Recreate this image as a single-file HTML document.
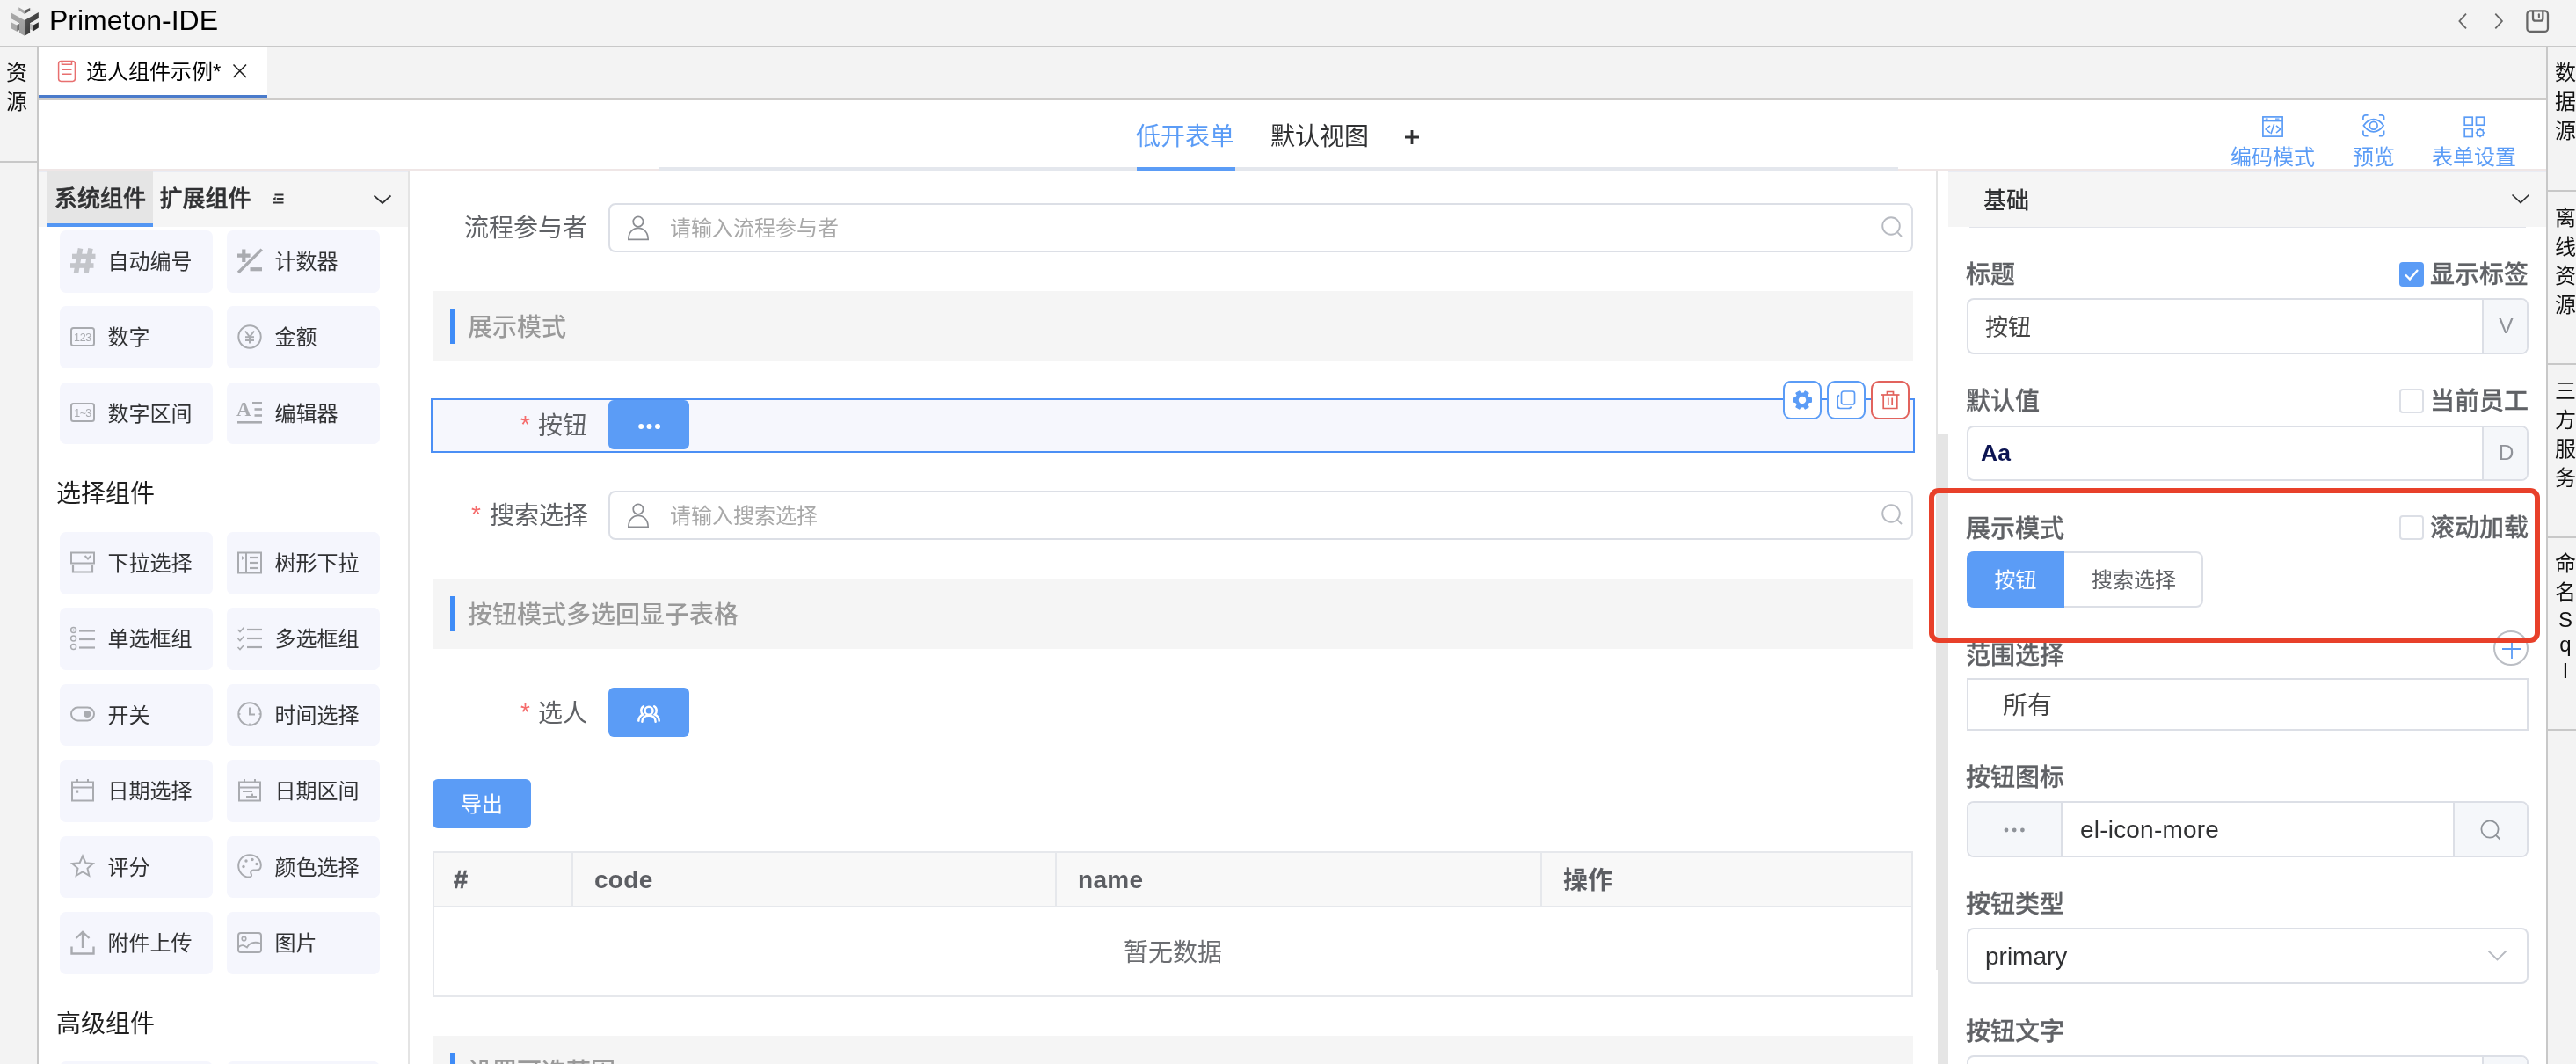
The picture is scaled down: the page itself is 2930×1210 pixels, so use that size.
<!DOCTYPE html>
<html lang="zh-CN"><head><meta charset="utf-8"><title>Primeton-IDE</title>
<style>
html,body{margin:0;padding:0;}
body{width:2930px;height:1210px;overflow:hidden;background:#fff;position:relative;font-family:"Liberation Sans","Noto Sans CJK SC",sans-serif;will-change:transform;}
div,svg{position:absolute;box-sizing:border-box;}
.t{white-space:nowrap;}
svg{overflow:visible;}
svg text{font-family:"Liberation Sans","Noto Sans CJK SC",sans-serif;}
.card{background:#f5f6fd;border-radius:7px;}
.inp{border:2px solid #dcdfe6;border-radius:8px;background:#fff;}
</style></head><body>
<div style="left:0px;top:0px;width:2930px;height:52px;background:#f3f3f3;"></div>
<div style="left:0px;top:52px;width:2930px;height:2px;background:#c8c8c8;"></div>
<svg style="left:6px;top:0px;" width="50" height="50" viewBox="0 0 1064 1064">
<defs><linearGradient id="lgR" x1="0" y1="0" x2="1" y2="1"><stop offset="0" stop-color="#5a5a5a"/><stop offset="1" stop-color="#2c2c2c"/></linearGradient>
<linearGradient id="lgL" x1="0" y1="0" x2="0" y2="1"><stop offset="0" stop-color="#a8a8a8"/><stop offset="1" stop-color="#9a9a9a"/></linearGradient></defs>
<polygon points="130,300 460,120 805,295 468,492" fill="#efefef"/>
<polygon points="325,175 460,105 600,190 465,258" fill="#f5f5f5"/>
<polygon points="325,175 465,258 465,338 325,245" fill="#a9a9a9"/>
<polygon points="600,190 465,258 465,338 600,262" fill="#5c5c5c"/>
<polygon points="130,305 468,492 468,865 340,795 340,560 130,445" fill="url(#lgL)"/>
<polygon points="805,300 468,492 468,865 598,795 598,560 805,445" fill="url(#lgR)"/>
<polygon points="130,447 340,562 340,575 280,604 130,530" fill="#eeeeee"/>
<polygon points="130,530 280,604 280,762 130,682" fill="#a9a9a9"/>
<polygon points="280,604 340,574 340,722 280,762" fill="#6c6c6c"/>
<polygon points="805,447 598,562 598,568 680,607 805,535" fill="#eeeeee"/>
<polygon points="598,566 680,607 680,752 598,702" fill="#b8b8b8"/>
<polygon points="680,607 805,535 805,672 680,752" fill="#2e2e2e"/>
</svg>
<div class="t" style="left:56px;top:1.30px;height:44px;line-height:44px;font-size:32px;color:#000;">Primeton-IDE</div>
<svg style="left:2790px;top:10px;" width="64" height="30" viewBox="0 0 64 30"><path d="M15 5.7 L7.4 14 L15 22.3 M48.3 5.7 L55.9 14 L48.3 22.3" fill="none" stroke="#666" stroke-width="1.8"/></svg>
<svg style="left:2872.8px;top:10.8px;" width="26.4" height="26.4" viewBox="0 0 28 28"><rect x="1.5" y="1.5" width="25" height="25" rx="4" fill="none" stroke="#666" stroke-width="2.4"/><path d="M8.5 2 V10.5 Q8.5 13.5 11.5 13.5 H17.5 Q20.5 13.5 20.5 10.5 V2" fill="none" stroke="#666" stroke-width="2.4"/><path d="M15.8 5.5 V9" stroke="#666" stroke-width="2.2" stroke-linecap="round"/></svg>
<div style="left:0px;top:54px;width:42px;height:1156px;background:#f3f3f3;"></div>
<div style="left:42px;top:54px;width:2px;height:1156px;background:#c8c8c8;"></div>
<div style="left:0px;top:183px;width:42px;height:2px;background:#c8c8c8;"></div>
<div class="t" style="left:7px;top:67.80px;height:30px;line-height:30px;font-size:24px;color:#111;">资</div>
<div class="t" style="left:7px;top:100.80px;height:30px;line-height:30px;font-size:24px;color:#111;">源</div>
<div style="left:2898px;top:54px;width:32px;height:1156px;background:#f3f3f3;"></div>
<div style="left:2896px;top:54px;width:2px;height:1156px;background:#c8c8c8;"></div>
<div style="left:2898px;top:216px;width:32px;height:2px;background:#c8c8c8;"></div>
<div style="left:2898px;top:413px;width:32px;height:2px;background:#c8c8c8;"></div>
<div style="left:2898px;top:610px;width:32px;height:2px;background:#c8c8c8;"></div>
<div style="left:2898px;top:829px;width:32px;height:2px;background:#c8c8c8;"></div>
<div class="t" style="left:2906px;top:67.80px;height:30px;line-height:30px;font-size:24px;color:#111;">数</div>
<div class="t" style="left:2906px;top:100.80px;height:30px;line-height:30px;font-size:24px;color:#111;">据</div>
<div class="t" style="left:2906px;top:133.80px;height:30px;line-height:30px;font-size:24px;color:#111;">源</div>
<div class="t" style="left:2906px;top:232.80px;height:30px;line-height:30px;font-size:24px;color:#111;">离</div>
<div class="t" style="left:2906px;top:265.80px;height:30px;line-height:30px;font-size:24px;color:#111;">线</div>
<div class="t" style="left:2906px;top:298.80px;height:30px;line-height:30px;font-size:24px;color:#111;">资</div>
<div class="t" style="left:2906px;top:331.80px;height:30px;line-height:30px;font-size:24px;color:#111;">源</div>
<div class="t" style="left:2906px;top:429.80px;height:30px;line-height:30px;font-size:24px;color:#111;">三</div>
<div class="t" style="left:2906px;top:462.80px;height:30px;line-height:30px;font-size:24px;color:#111;">方</div>
<div class="t" style="left:2906px;top:495.80px;height:30px;line-height:30px;font-size:24px;color:#111;">服</div>
<div class="t" style="left:2906px;top:528.80px;height:30px;line-height:30px;font-size:24px;color:#111;">务</div>
<div class="t" style="left:2906px;top:625.80px;height:30px;line-height:30px;font-size:24px;color:#111;">命</div>
<div class="t" style="left:2906px;top:658.80px;height:30px;line-height:30px;font-size:24px;color:#111;">名</div>
<div class="t" style="left:2906px;top:689.80px;height:30px;line-height:30px;font-size:24px;color:#111;width:24px;text-align:center;">S</div>
<div class="t" style="left:2906px;top:717.80px;height:30px;line-height:30px;font-size:24px;color:#111;width:24px;text-align:center;">q</div>
<div class="t" style="left:2906px;top:747.80px;height:30px;line-height:30px;font-size:24px;color:#111;width:24px;text-align:center;">l</div>
<div style="left:44px;top:54px;width:2852px;height:58px;background:#f3f3f3;"></div>
<div style="left:44px;top:112px;width:2852px;height:2px;background:#cdcbc9;"></div>
<div style="left:44px;top:54px;width:260px;height:58px;background:#fff;"></div>
<div style="left:44px;top:108px;width:260px;height:4px;background:#4a7bcb;"></div>
<svg style="left:65px;top:68px;" width="22" height="26" viewBox="0 0 22 26"><rect x="1.6" y="1.6" width="18.8" height="22.8" rx="2.8" fill="none" stroke="#e86f6f" stroke-width="1.5"/><path d="M5.5 1.6 V5.2 H16.5 V1.6" fill="none" stroke="#e86f6f" stroke-width="1.5"/><path d="M5.5 11.2 H16.5 M5.5 16.3 H16.5" stroke="#e86f6f" stroke-width="1.5"/></svg>
<div class="t" style="left:98px;top:65.80px;height:32px;line-height:32px;font-size:24px;color:#000;">选人组件示例*</div>
<svg style="left:264px;top:72px;" width="18" height="18" viewBox="0 0 18 18"><path d="M1.5 1.5 L16 16 M16 1.5 L1.5 16" stroke="#222" stroke-width="1.6" fill="none"/></svg>
<div style="left:44px;top:192px;width:2852px;height:2px;background:#efe6e6;"></div>
<div style="left:749px;top:190px;width:1410px;height:4px;background:#e4e7ed;"></div>
<div style="left:1293px;top:190px;width:112px;height:4px;background:#5b9cf6;"></div>
<div class="t" style="left:1292px;top:135.80px;height:40px;line-height:40px;font-size:28px;color:#5b9cf6;">低开表单</div>
<div class="t" style="left:1445px;top:135.80px;height:40px;line-height:40px;font-size:28px;color:#303133;">默认视图</div>
<svg style="left:1597px;top:147px;" width="18" height="18" viewBox="0 0 18 18"><path d="M9 1 V17 M1 9 H17" stroke="#303133" stroke-width="2.8" fill="none"/></svg>
<svg style="left:2572px;top:131px;" width="26" height="26" viewBox="0 0 26 26"><rect x="1.9" y="1.9" width="22.2" height="22.2" fill="none" stroke="#5b9cf6" stroke-width="1.7"/><path d="M1.9 6.6 H24.1" stroke="#5b9cf6" stroke-width="1.5"/><path d="M4.8 4.2 H7.6 M16 4.2 H20.5" stroke="#5b9cf6" stroke-width="1.3"/><path d="M10 11.8 L5.2 15.9 L10 20 M17 11.8 L21.8 15.9 L17 20 M14.6 10.2 L11 21.3" fill="none" stroke="#5b9cf6" stroke-width="1.6"/></svg>
<div class="t" style="left:2537px;top:162.80px;height:32px;line-height:32px;font-size:24px;color:#5b9cf6;">编码模式</div>
<svg style="left:2685.5px;top:129.3px;" width="27.5" height="27.5" viewBox="0 0 29 29"><g fill="none" stroke="#5b9cf6" stroke-width="1.8"><path d="M2 8.5 V5 Q2 2 5 2 H8"/><path d="M21 2 H24 Q27 2 27 5 V8.5"/><path d="M2 20.5 V24 Q2 27 5 27 H8"/><path d="M21 27 H24 Q27 27 27 24 V20.5"/><path d="M2.5 14.5 Q8 7 14.5 7 Q21 7 26.5 14.5 Q21 22 14.5 22 Q8 22 2.5 14.5 Z"/><circle cx="14.5" cy="14.5" r="4.6"/></g></svg>
<div class="t" style="left:2676px;top:162.80px;height:32px;line-height:32px;font-size:24px;color:#5b9cf6;">预览</div>
<svg style="left:2802px;top:131.8px;" width="26" height="26" viewBox="0 0 26 26"><g fill="none" stroke="#5b9cf6" stroke-width="1.7"><rect x="1.2" y="1.2" width="9" height="9"/><rect x="14.5" y="1.2" width="9" height="9"/><rect x="1.2" y="14.5" width="9" height="9"/><circle cx="19" cy="19" r="3.6"/><path d="M19 13.8 V15.2 M19 22.8 V24.2 M13.8 19 H15.2 M22.8 19 H24.2 M15.3 15.3 L16.3 16.3 M21.7 21.7 L22.7 22.7 M15.3 22.7 L16.3 21.7 M21.7 16.3 L22.7 15.3" stroke-width="1.5"/></g></svg>
<div class="t" style="left:2766px;top:162.80px;height:32px;line-height:32px;font-size:24px;color:#5b9cf6;">表单设置</div>
<div style="left:44px;top:194px;width:420px;height:64px;background:#f5f5f5;border-top:2px solid #e9ecf4;"></div>
<div style="left:464px;top:194px;width:2px;height:1016px;background:#e4e4e4;"></div>
<div style="left:54px;top:194px;width:120px;height:64px;background:#e5e5e5;"></div>
<div style="left:54px;top:254px;width:120px;height:4px;background:#5396f3;"></div>
<div class="t" style="left:62px;top:208.30px;height:36px;line-height:36px;font-size:26px;color:#303133;font-weight:500;-webkit-text-stroke:0.5px #303133;">系统组件</div>
<div class="t" style="left:181.5px;top:208.30px;height:36px;line-height:36px;font-size:26px;color:#303133;font-weight:500;-webkit-text-stroke:0.5px #303133;">扩展组件</div>
<svg style="left:310px;top:220px;" width="14" height="12" viewBox="0 0 14 12"><path d="M2.5 1.5 H12.5 M4.8 6 H12.5 M1 10.5 H12.5" stroke="#303133" stroke-width="1.9" fill="none"/><path d="M0.3 6 L3.6 3.8 V8.2 Z" fill="#303133"/></svg>
<svg style="left:424px;top:221px;" width="22" height="12" viewBox="0 0 22 12"><path d="M1.5 1.5 L11 10 L20.5 1.5" stroke="#303133" stroke-width="1.7" fill="none"/></svg>
<div class="card" style="left:68px;top:262px;width:174px;height:70.6px;"></div>
<svg style="left:80px;top:282.5px;" width="28" height="28" viewBox="0 0 28 28"><g fill="none" stroke="#c3c5ca" stroke-width="5.6"><path d="M11.5 -0.5 L6.5 27.5"/><path d="M23 -0.5 L18 27.5"/><path d="M2 8.5 H28.5"/><path d="M0 19 H26.5"/></g></svg>
<div class="t" style="left:122.5px;top:281.80px;height:32px;line-height:32px;font-size:24px;color:#303133;">自动编号</div>
<div class="card" style="left:258px;top:262px;width:174px;height:70.6px;"></div>
<svg style="left:270px;top:282.5px;" width="28" height="28" viewBox="0 0 28 28"><g fill="none" stroke="#a9abb0"><path d="M7.3 0.5 V15 M0 7.7 H14.6" stroke-width="4.2"/><path d="M1 27 L27.8 0.6" stroke-width="3.4"/><path d="M14.5 23.2 H28" stroke-width="4.2"/></g></svg>
<div class="t" style="left:312.5px;top:281.80px;height:32px;line-height:32px;font-size:24px;color:#303133;">计数器</div>
<div class="card" style="left:68px;top:348.4px;width:174px;height:70.6px;"></div>
<svg style="left:80px;top:368.9px;" width="28" height="28" viewBox="0 0 28 28"><rect x="1" y="4" width="26" height="20" rx="2.5" fill="none" stroke="#a9abb0" stroke-width="2"/><text x="14" y="19.2" font-size="12.5" text-anchor="middle" fill="#a9abb0" letter-spacing="-0.3">123</text></svg>
<div class="t" style="left:122.5px;top:367.80px;height:32px;line-height:32px;font-size:24px;color:#303133;">数字</div>
<div class="card" style="left:258px;top:348.4px;width:174px;height:70.6px;"></div>
<svg style="left:270px;top:368.9px;" width="28" height="28" viewBox="0 0 28 28"><circle cx="14" cy="14" r="12.7" fill="none" stroke="#a9abb0" stroke-width="2"/><g fill="none" stroke="#a9abb0" stroke-width="2"><path d="M9 7.5 L14 14 L19 7.5"/><path d="M14 14 V21.5"/><path d="M9 14.2 H19"/><path d="M9 18 H19"/></g></svg>
<div class="t" style="left:312.5px;top:367.80px;height:32px;line-height:32px;font-size:24px;color:#303133;">金额</div>
<div class="card" style="left:68px;top:434.8px;width:174px;height:70.6px;"></div>
<svg style="left:80px;top:455.3px;" width="28" height="28" viewBox="0 0 28 28"><rect x="1" y="4" width="26" height="20" rx="2.5" fill="none" stroke="#a9abb0" stroke-width="2"/><text x="14" y="19" font-size="12.5" text-anchor="middle" fill="#a9abb0" letter-spacing="-0.6">1~3</text></svg>
<div class="t" style="left:122.5px;top:454.80px;height:32px;line-height:32px;font-size:24px;color:#303133;">数字区间</div>
<div class="card" style="left:258px;top:434.8px;width:174px;height:70.6px;"></div>
<svg style="left:270px;top:455.3px;" width="28" height="28" viewBox="0 0 28 28"><text x="-1" y="18" font-size="23" font-weight="700" fill="#a9abb0" style="font-family:'Liberation Serif',serif">A</text><g fill="none" stroke="#a9abb0" stroke-width="2.6"><path d="M17 3.3 H28"/><path d="M19.5 10.5 H28"/><path d="M19.5 17.5 H28"/><path d="M0 25.3 H28"/></g></svg>
<div class="t" style="left:312.5px;top:454.80px;height:32px;line-height:32px;font-size:24px;color:#303133;">编辑器</div>
<div class="card" style="left:68px;top:605px;width:174px;height:70.6px;"></div>
<svg style="left:80px;top:625.5px;" width="28" height="28" viewBox="0 0 28 28"><rect x="1" y="2.5" width="26" height="12" fill="none" stroke="#a9abb0" stroke-width="2"/><path d="M16.5 6 L20 9.5 L23.5 6" fill="none" stroke="#a9abb0" stroke-width="2"/><path d="M3 16.5 V24.5 H25 V16.5" fill="none" stroke="#a9abb0" stroke-width="2.2"/></svg>
<div class="t" style="left:122.5px;top:624.80px;height:32px;line-height:32px;font-size:24px;color:#303133;">下拉选择</div>
<div class="card" style="left:258px;top:605px;width:174px;height:70.6px;"></div>
<svg style="left:270px;top:625.5px;" width="28" height="28" viewBox="0 0 28 28"><rect x="1" y="2.5" width="26" height="23" fill="none" stroke="#a9abb0" stroke-width="2"/><path d="M10 2.5 V25.5" fill="none" stroke="#a9abb0" stroke-width="2"/><path d="M5 6 L8 8.5 L5 11 Z" fill="#a9abb0"/><g fill="none" stroke="#a9abb0" stroke-width="2.2"><path d="M14 8 H23.5"/><path d="M14 14 H23.5"/><path d="M14 20 H23.5"/></g></svg>
<div class="t" style="left:312.5px;top:624.80px;height:32px;line-height:32px;font-size:24px;color:#303133;">树形下拉</div>
<div class="card" style="left:68px;top:691.4px;width:174px;height:70.6px;"></div>
<svg style="left:80px;top:711.9px;" width="28" height="28" viewBox="0 0 28 28"><g fill="none" stroke="#a9abb0" stroke-width="1.4"><circle cx="3.6" cy="4.5" r="3"/><circle cx="3.6" cy="14" r="3"/><circle cx="3.6" cy="23.5" r="3"/></g><circle cx="3.6" cy="4.5" r="1" fill="#a9abb0"/><g fill="none" stroke="#a9abb0" stroke-width="2.2"><path d="M10 5.5 H28"/><path d="M10 15 H28"/><path d="M10 24.5 H28"/></g></svg>
<div class="t" style="left:122.5px;top:710.80px;height:32px;line-height:32px;font-size:24px;color:#303133;">单选框组</div>
<div class="card" style="left:258px;top:691.4px;width:174px;height:70.6px;"></div>
<svg style="left:270px;top:711.9px;" width="28" height="28" viewBox="0 0 28 28"><g fill="none" stroke="#a9abb0" stroke-width="1.6"><path d="M0.5 4 L3 6.5 L7.5 1.5"/><path d="M0.5 14 L3 16.5 L7.5 11.5"/><path d="M0.5 24 L3 26.5 L7.5 21.5"/></g><g fill="none" stroke="#a9abb0" stroke-width="2.2"><path d="M11 4 H28"/><path d="M11 14 H28"/><path d="M11 24 H28"/></g></svg>
<div class="t" style="left:312.5px;top:710.80px;height:32px;line-height:32px;font-size:24px;color:#303133;">多选框组</div>
<div class="card" style="left:68px;top:777.8px;width:174px;height:70.6px;"></div>
<svg style="left:80px;top:798.3px;" width="28" height="28" viewBox="0 0 28 28"><rect x="1" y="6.5" width="26" height="15" rx="7.5" fill="none" stroke="#a9abb0" stroke-width="2"/><circle cx="19.3" cy="14" r="4" fill="#a9abb0"/></svg>
<div class="t" style="left:122.5px;top:797.80px;height:32px;line-height:32px;font-size:24px;color:#303133;">开关</div>
<div class="card" style="left:258px;top:777.8px;width:174px;height:70.6px;"></div>
<svg style="left:270px;top:798.3px;" width="28" height="28" viewBox="0 0 28 28"><circle cx="14" cy="14" r="12.7" fill="none" stroke="#a9abb0" stroke-width="2"/><path d="M14 6.5 V14.5 H20" fill="none" stroke="#a9abb0" stroke-width="2"/><g fill="none" stroke="#a9abb0" stroke-width="1.6"><path d="M14 24.5 V27"/><path d="M1 14 H3.5"/><path d="M24.5 14 H27"/></g></svg>
<div class="t" style="left:312.5px;top:797.80px;height:32px;line-height:32px;font-size:24px;color:#303133;">时间选择</div>
<div class="card" style="left:68px;top:864.2px;width:174px;height:70.6px;"></div>
<svg style="left:80px;top:884.7px;" width="28" height="28" viewBox="0 0 28 28"><rect x="2" y="4.5" width="24" height="21" fill="none" stroke="#a9abb0" stroke-width="2"/><path d="M2 10.5 H26" fill="none" stroke="#a9abb0" stroke-width="2"/><path d="M8 1 V6" fill="none" stroke="#a9abb0" stroke-width="2"/><path d="M20 1 V6" fill="none" stroke="#a9abb0" stroke-width="2"/><rect x="6" y="13.5" width="3.2" height="3.2" fill="#a9abb0"/></svg>
<div class="t" style="left:122.5px;top:883.80px;height:32px;line-height:32px;font-size:24px;color:#303133;">日期选择</div>
<div class="card" style="left:258px;top:864.2px;width:174px;height:70.6px;"></div>
<svg style="left:270px;top:884.7px;" width="28" height="28" viewBox="0 0 28 28"><rect x="2" y="4.5" width="24" height="21" fill="none" stroke="#a9abb0" stroke-width="2"/><path d="M2 10.5 H26" fill="none" stroke="#a9abb0" stroke-width="2"/><path d="M8 1 V6" fill="none" stroke="#a9abb0" stroke-width="2"/><path d="M20 1 V6" fill="none" stroke="#a9abb0" stroke-width="2"/><path d="M6 15 H17" fill="none" stroke="#a9abb0" stroke-width="2"/><path d="M10 21 H22" fill="none" stroke="#a9abb0" stroke-width="2"/><rect x="15" y="17.6" width="3" height="3" fill="#a9abb0"/></svg>
<div class="t" style="left:312.5px;top:883.80px;height:32px;line-height:32px;font-size:24px;color:#303133;">日期区间</div>
<div class="card" style="left:68px;top:950.6px;width:174px;height:70.6px;"></div>
<svg style="left:80px;top:971.1px;" width="28" height="28" viewBox="0 0 28 28"><path d="M14 2.5 L17.4 10.2 L25.8 11 L19.5 16.6 L21.3 24.8 L14 20.5 L6.7 24.8 L8.5 16.6 L2.2 11 L10.6 10.2 Z" fill="none" stroke="#a9abb0" stroke-width="2" stroke-linejoin="miter"/></svg>
<div class="t" style="left:122.5px;top:970.80px;height:32px;line-height:32px;font-size:24px;color:#303133;">评分</div>
<div class="card" style="left:258px;top:950.6px;width:174px;height:70.6px;"></div>
<svg style="left:270px;top:971.1px;" width="28" height="28" viewBox="0 0 28 28"><path d="M14 1.3 C6.5 1.3 1.2 6.8 1.2 13.5 C1.2 21 7 26.6 13 26.6 C16.2 26.6 16.6 24.6 15.6 22.8 C14.4 20.6 15.8 18.6 18.2 18.6 L21.5 18.6 C25 18.6 26.8 16.4 26.8 13 C26.8 6.5 21.5 1.3 14 1.3 Z" fill="none" stroke="#a9abb0" stroke-width="2"/><circle cx="7" cy="14.5" r="1.7" fill="#a9abb0"/><circle cx="10" cy="8" r="1.7" fill="#a9abb0"/><circle cx="17" cy="6.5" r="1.7" fill="#a9abb0"/><circle cx="22" cy="11.5" r="1.7" fill="#a9abb0"/></svg>
<div class="t" style="left:312.5px;top:970.80px;height:32px;line-height:32px;font-size:24px;color:#303133;">颜色选择</div>
<div class="card" style="left:68px;top:1037px;width:174px;height:70.6px;"></div>
<svg style="left:80px;top:1057.5px;" width="28" height="28" viewBox="0 0 28 28"><g fill="none" stroke="#a9abb0" stroke-width="2.4"><path d="M14 2 V20"/><path d="M6.5 9 L14 1.8 L21.5 9"/><path d="M1.5 18.5 V26.5 H26.5 V18.5"/></g></svg>
<div class="t" style="left:122.5px;top:1056.80px;height:32px;line-height:32px;font-size:24px;color:#303133;">附件上传</div>
<div class="card" style="left:258px;top:1037px;width:174px;height:70.6px;"></div>
<svg style="left:270px;top:1057.5px;" width="28" height="28" viewBox="0 0 28 28"><rect x="1" y="3" width="26" height="22" rx="3" fill="none" stroke="#a9abb0" stroke-width="2"/><circle cx="7.5" cy="9.5" r="2.3" fill="none" stroke="#a9abb0" stroke-width="1.6"/><path d="M1.5 19 C5 15.5 8 17.5 11 19.5 C13 15 19 12 26.5 15" fill="none" stroke="#a9abb0" stroke-width="1.8"/></svg>
<div class="t" style="left:312.5px;top:1056.80px;height:32px;line-height:32px;font-size:24px;color:#303133;">图片</div>
<div class="card" style="left:68px;top:1207px;width:174px;height:70.6px;"></div>
<div class="card" style="left:258px;top:1207px;width:174px;height:70.6px;"></div>
<div class="t" style="left:64px;top:542.80px;height:38px;line-height:38px;font-size:28px;color:#1f1f1f;">选择组件</div>
<div class="t" style="left:64px;top:1145.80px;height:38px;line-height:38px;font-size:28px;color:#1f1f1f;">高级组件</div>
<div class="t" style="left:528px;top:240.80px;height:38px;line-height:38px;font-size:28px;color:#606266;">流程参与者</div>
<div class="inp" style="left:692px;top:231px;width:1484px;height:56px;"></div>
<svg style="left:713px;top:245.5px;" width="25" height="28" viewBox="0 0 25 28"><g fill="none" stroke="#8b8d92" stroke-width="1.7"><circle cx="12.9" cy="6.1" r="5.7"/><path d="M1.85 26.3 C1.85 19 6.3 13.3 13 13.3 C19.7 13.3 24.15 19 24.15 26.3 Z" stroke-linejoin="miter"/></g></svg>
<div class="t" style="left:762px;top:243.80px;height:32px;line-height:32px;font-size:24px;color:#a8a8a8;">请输入流程参与者</div>
<svg style="left:2140px;top:245.5px;" width="24" height="24" viewBox="0 0 24 24"><g fill="none" stroke="#b7bac1" stroke-width="1.9"><circle cx="11" cy="11" r="9.8"/><path d="M18.2 18.2 L23 23"/></g></svg>
<div style="left:492px;top:331px;width:1684px;height:80px;background:#f5f5f5;"></div>
<div style="left:511.5px;top:351px;width:6.5px;height:40px;background:#3f8cf7;"></div>
<div class="t" style="left:532px;top:353.80px;height:38px;line-height:38px;font-size:28px;color:#999;font-weight:500;">展示模式</div>
<div style="left:490px;top:453px;width:1688px;height:62px;border:2px solid #4b8ff5;background:#f6f7fd;"></div>
<div class="t" style="left:592px;top:463.80px;height:38px;line-height:38px;font-size:28px;color:#f56c6c;">*</div>
<div class="t" style="left:612px;top:465.80px;height:38px;line-height:38px;font-size:28px;color:#606266;">按钮</div>
<div style="left:692px;top:455px;width:92px;height:56px;background:#5b9cf6;border-radius:6px;"></div>
<svg style="left:724px;top:480px;" width="30" height="10" viewBox="0 0 30 10"><circle cx="5.2" cy="5" r="3" fill="#fff"/><circle cx="14.5" cy="5" r="3" fill="#fff"/><circle cx="24" cy="5" r="3" fill="#fff"/></svg>
<div style="left:2028px;top:433px;width:44px;height:44px;border:2px solid #5b9cf6;border-radius:9px;background:#fff;"></div>
<svg style="left:2038px;top:443px;" width="24" height="24" viewBox="0 0 24 24"><g transform="translate(12 12) rotate(30)"><g fill="#5b9cf6"><rect x="-2.9" y="-11" width="5.8" height="6" rx="0.8" transform="rotate(0)"/><rect x="-2.9" y="-11" width="5.8" height="6" rx="0.8" transform="rotate(60)"/><rect x="-2.9" y="-11" width="5.8" height="6" rx="0.8" transform="rotate(120)"/><rect x="-2.9" y="-11" width="5.8" height="6" rx="0.8" transform="rotate(180)"/><rect x="-2.9" y="-11" width="5.8" height="6" rx="0.8" transform="rotate(240)"/><rect x="-2.9" y="-11" width="5.8" height="6" rx="0.8" transform="rotate(300)"/></g><circle r="6.3" fill="none" stroke="#5b9cf6" stroke-width="4.2"/></g></svg>
<div style="left:2078px;top:433px;width:44px;height:44px;border:2px solid #5b9cf6;border-radius:9px;background:#fff;"></div>
<svg style="left:2088px;top:443px;" width="24" height="24" viewBox="0 0 24 24"><g fill="none" stroke="#5b9cf6" stroke-width="1.7"><rect x="6.5" y="2" width="15" height="15" rx="2.5"/><path d="M4.2 6.5 Q2.2 7 2.2 9.5 V18.5 Q2.2 21.5 5.2 21.5 H14.5 Q17 21.5 17.5 19.5"/></g></svg>
<div style="left:2128px;top:433px;width:44px;height:44px;border:2px solid #e2635d;border-radius:9px;background:#fff;"></div>
<svg style="left:2138px;top:443px;" width="24" height="24" viewBox="0 0 24 24"><g fill="none" stroke="#e2635d" stroke-width="1.7"><path d="M1.5 6 H22.5"/><path d="M8.5 6 V2.5 H15.5 V6"/><path d="M4.2 6 V21.5 H19.8 V6"/><path d="M9.8 9.5 V18 M14.2 9.5 V18"/></g></svg>
<div class="t" style="left:536px;top:565.80px;height:38px;line-height:38px;font-size:28px;color:#f56c6c;">*</div>
<div class="t" style="left:557px;top:567.80px;height:38px;line-height:38px;font-size:28px;color:#606266;">搜索选择</div>
<div class="inp" style="left:692px;top:558px;width:1484px;height:56px;"></div>
<svg style="left:713px;top:572.5px;" width="25" height="28" viewBox="0 0 25 28"><g fill="none" stroke="#8b8d92" stroke-width="1.7"><circle cx="12.9" cy="6.1" r="5.7"/><path d="M1.85 26.3 C1.85 19 6.3 13.3 13 13.3 C19.7 13.3 24.15 19 24.15 26.3 Z" stroke-linejoin="miter"/></g></svg>
<div class="t" style="left:762px;top:570.80px;height:32px;line-height:32px;font-size:24px;color:#a8a8a8;">请输入搜索选择</div>
<svg style="left:2140px;top:572.5px;" width="24" height="24" viewBox="0 0 24 24"><g fill="none" stroke="#b7bac1" stroke-width="1.9"><circle cx="11" cy="11" r="9.8"/><path d="M18.2 18.2 L23 23"/></g></svg>
<div style="left:492px;top:658px;width:1684px;height:80px;background:#f5f5f5;"></div>
<div style="left:511.5px;top:678px;width:6.5px;height:40px;background:#3f8cf7;"></div>
<div class="t" style="left:532px;top:680.80px;height:38px;line-height:38px;font-size:28px;color:#999;font-weight:500;">按钮模式多选回显子表格</div>
<div class="t" style="left:592px;top:790.80px;height:38px;line-height:38px;font-size:28px;color:#f56c6c;">*</div>
<div class="t" style="left:612px;top:792.80px;height:38px;line-height:38px;font-size:28px;color:#606266;">选人</div>
<div style="left:692px;top:782px;width:92px;height:56px;background:#5b9cf6;border-radius:6px;"></div>
<svg style="left:725px;top:800.5px;" width="26" height="21.4" viewBox="0 0 28 23"><g fill="none" stroke="#fff" stroke-width="2.7" stroke-linecap="round"><circle cx="14" cy="7.8" r="4.9"/><path d="M5.8 21.3 C5.8 16.5 9.2 13.6 14 13.6 C18.8 13.6 22.2 16.5 22.2 21.3"/><path d="M7.4 2.4 C3.8 4.6 3.8 10 6.6 12.4 C3.4 13.8 1.6 16.8 1.4 20"/><path d="M20.6 2.4 C24.2 4.6 24.2 10 21.4 12.4 C24.6 13.8 26.4 16.8 26.6 20"/></g></svg>
<div style="left:492px;top:886px;width:112px;height:56px;background:#5b9cf6;border-radius:6px;"></div>
<div class="t" style="left:492px;top:898.80px;height:32px;line-height:32px;font-size:24px;color:#fff;width:112px;text-align:center;">导出</div>
<div style="left:492px;top:968px;width:1684px;height:166px;border:2px solid #e6e8ec;background:#fff;"></div>
<div style="left:494px;top:970px;width:1680px;height:60px;background:#f8f8f8;"></div>
<div style="left:494px;top:1030px;width:1680px;height:2px;background:#e6e8ec;"></div>
<div style="left:650px;top:970px;width:2px;height:60px;background:#e6e8ec;"></div>
<div style="left:1200px;top:970px;width:2px;height:60px;background:#e6e8ec;"></div>
<div style="left:1752px;top:970px;width:2px;height:60px;background:#e6e8ec;"></div>
<div class="t" style="left:516px;top:982.30px;height:36px;line-height:36px;font-size:29px;color:#5c5e63;font-weight:700;-webkit-text-stroke:0.7px #5c5e63;">#</div>
<div class="t" style="left:676px;top:982.80px;height:36px;line-height:36px;font-size:28px;color:#5c5e63;font-weight:700;letter-spacing:0.3px;">code</div>
<div class="t" style="left:1226px;top:982.80px;height:36px;line-height:36px;font-size:28px;color:#5c5e63;font-weight:700;letter-spacing:0.3px;">name</div>
<div class="t" style="left:1778px;top:982.80px;height:38px;line-height:38px;font-size:28px;color:#5c5e63;font-weight:700;">操作</div>
<div class="t" style="left:492px;top:1064.80px;height:38px;line-height:38px;font-size:28px;color:#6b6d71;width:1684px;text-align:center;">暂无数据</div>
<div style="left:492px;top:1178px;width:1684px;height:80px;background:#f5f5f5;"></div>
<div style="left:511.5px;top:1198px;width:6.5px;height:40px;background:#3f8cf7;"></div>
<div class="t" style="left:532px;top:1200.80px;height:38px;line-height:38px;font-size:28px;color:#999;font-weight:500;">设置可选范围</div>
<div style="left:2202px;top:194px;width:2px;height:1016px;background:#e4e4e4;"></div>
<div style="left:2202px;top:493px;width:14px;height:610px;background:#e5e5e5;"></div>
<div style="left:2204px;top:1103px;width:12px;height:107px;background:#e5e5e5;"></div>
<div style="left:2202px;top:1103px;width:2px;height:107px;background:#fff;"></div>
<div style="left:2216px;top:194px;width:680px;height:64px;background:#f5f5f5;border-top:2px solid #e9ecf4;"></div>
<div style="left:2240px;top:257.5px;width:633px;height:1.5px;background:#e2e4ea;"></div>
<div class="t" style="left:2256px;top:210.30px;height:36px;line-height:36px;font-size:26px;color:#303133;font-weight:500;">基础</div>
<svg style="left:2856px;top:220px;" width="22" height="13" viewBox="0 0 22 13"><path d="M1.5 1.5 L11 10.5 L20.5 1.5" stroke="#303133" stroke-width="1.7" fill="none"/></svg>
<div class="t" style="left:2236px;top:293.80px;height:38px;line-height:38px;font-size:28px;color:#606266;font-weight:500;-webkit-text-stroke:0.3px #606266;">标题</div>
<div style="left:2729px;top:298.0px;width:28px;height:28px;background:#5b9cf6;border-radius:4px;"></div>
<svg style="left:2729px;top:298.0px;" width="28" height="28" viewBox="0 0 28 28"><path d="M7 14.5 L12 19.5 L21 9" fill="none" stroke="#fff" stroke-width="2.4"/></svg>
<div class="t" style="left:2764px;top:293.80px;height:38px;line-height:38px;font-size:28px;color:#606266;font-weight:500;-webkit-text-stroke:0.3px #606266;">显示标签</div>
<div class="inp" style="left:2237px;top:339px;width:639px;height:63.5px;overflow:hidden;"><div style="right:0;top:0;width:51px;height:59.5px;background:#f5f7fa;border-left:2px solid #dcdfe6;"></div></div>
<div class="t" style="left:2825px;top:352.80px;height:36px;line-height:36px;font-size:24.5px;color:#909399;width:51px;text-align:center;">V</div>
<div class="t" style="left:2258px;top:354.30px;height:36px;line-height:36px;font-size:26px;color:#444;">按钮</div>
<div class="t" style="left:2236px;top:437.80px;height:38px;line-height:38px;font-size:28px;color:#606266;font-weight:500;-webkit-text-stroke:0.3px #606266;">默认值</div>
<div style="left:2729px;top:442.0px;width:28px;height:28px;border:2px solid #dcdfe6;border-radius:4px;background:#fff;"></div>
<div class="t" style="left:2764px;top:437.80px;height:38px;line-height:38px;font-size:28px;color:#606266;font-weight:500;-webkit-text-stroke:0.3px #606266;">当前员工</div>
<div class="inp" style="left:2237px;top:483.5px;width:639px;height:63px;overflow:hidden;"><div style="right:0;top:0;width:51px;height:59px;background:#f5f7fa;border-left:2px solid #dcdfe6;"></div></div>
<div class="t" style="left:2825px;top:496.80px;height:36px;line-height:36px;font-size:24.5px;color:#909399;width:51px;text-align:center;">D</div>
<div class="t" style="left:2253px;top:497.30px;height:36px;line-height:36px;font-size:26.5px;color:#0c1452;font-weight:700;">Aa</div>
<div class="t" style="left:2236px;top:582.80px;height:38px;line-height:38px;font-size:28px;color:#606266;font-weight:500;-webkit-text-stroke:0.3px #606266;">展示模式</div>
<div style="left:2729px;top:586.0px;width:28px;height:28px;border:2px solid #dcdfe6;border-radius:4px;background:#fff;"></div>
<div class="t" style="left:2764px;top:581.80px;height:38px;line-height:38px;font-size:28px;color:#606266;font-weight:500;-webkit-text-stroke:0.3px #606266;">滚动加载</div>
<div style="left:2237px;top:627px;width:269px;height:64px;border:2px solid #dcdfe6;border-radius:8px;background:#fff;"></div>
<div style="left:2237px;top:627px;width:111px;height:64px;background:#5b9cf6;border-radius:8px 0 0 8px;"></div>
<div class="t" style="left:2237px;top:643.80px;height:32px;line-height:32px;font-size:24px;color:#fff;width:111px;text-align:center;">按钮</div>
<div class="t" style="left:2348px;top:643.80px;height:32px;line-height:32px;font-size:24px;color:#606266;width:158px;text-align:center;">搜索选择</div>
<div class="t" style="left:2236px;top:726.80px;height:38px;line-height:38px;font-size:28px;color:#606266;font-weight:500;-webkit-text-stroke:0.3px #606266;">范围选择</div>
<div style="left:2836px;top:717px;width:40px;height:40px;border:2px solid #bbbec4;border-radius:50%;background:#fff;"></div>
<svg style="left:2846px;top:726.5px;" width="22" height="22" viewBox="0 0 22 22"><path d="M11 0 V22 M0 11 H22" stroke="#5b9cf6" stroke-width="1.8" fill="none"/></svg>
<div style="left:2237px;top:770.6px;width:639px;height:60.4px;border:2px solid #dcdfe6;background:#fff;"></div>
<div class="t" style="left:2278px;top:783.80px;height:38px;line-height:38px;font-size:28px;color:#444;">所有</div>
<div class="t" style="left:2236px;top:865.80px;height:38px;line-height:38px;font-size:28px;color:#606266;font-weight:500;-webkit-text-stroke:0.3px #606266;">按钮图标</div>
<div class="inp" style="left:2237px;top:911px;width:639px;height:63.5px;overflow:hidden;"><div style="left:0;top:0;width:107px;height:59.5px;background:#f5f7fa;border-right:2px solid #dcdfe6;"></div><div style="right:0;top:0;width:84px;height:59.5px;background:#f5f7fa;border-left:2px solid #dcdfe6;"></div></div>
<svg style="left:2279px;top:939.5px;" width="25" height="8" viewBox="0 0 25 8"><circle cx="3" cy="4" r="2.4" fill="#8f9399"/><circle cx="12.2" cy="4" r="2.4" fill="#8f9399"/><circle cx="21.4" cy="4" r="2.4" fill="#8f9399"/></svg>
<div class="t" style="left:2366px;top:925.80px;height:36px;line-height:36px;font-size:28px;color:#303133;letter-spacing:0.2px;">el-icon-more</div>
<svg style="left:2821px;top:931.5px;" width="24" height="24" viewBox="0 0 24 24"><g fill="none" stroke="#8f9399" stroke-width="1.8"><circle cx="11" cy="11" r="9.6"/><path d="M18 18 L22.5 22.5"/></g></svg>
<div class="t" style="left:2236px;top:1009.80px;height:38px;line-height:38px;font-size:28px;color:#606266;font-weight:500;-webkit-text-stroke:0.3px #606266;">按钮类型</div>
<div class="inp" style="left:2237px;top:1055px;width:639px;height:63.5px;"></div>
<div class="t" style="left:2258px;top:1069.80px;height:36px;line-height:36px;font-size:28px;color:#303133;">primary</div>
<svg style="left:2829px;top:1080px;" width="24" height="14" viewBox="0 0 24 14"><path d="M1.5 1.5 L11.5 11.5 L21.5 1.5" stroke="#b7bac1" stroke-width="1.8" fill="none"/></svg>
<div class="t" style="left:2236px;top:1154.80px;height:38px;line-height:38px;font-size:28px;color:#606266;font-weight:500;-webkit-text-stroke:0.3px #606266;">按钮文字</div>
<div class="inp" style="left:2237px;top:1200px;width:639px;height:62.5px;overflow:hidden;"><div style="right:0;top:0;width:51px;height:58.5px;background:#f5f7fa;border-left:2px solid #dcdfe6;"></div></div>
<div class="t" style="left:2825px;top:1212.80px;height:36px;line-height:36px;font-size:24.5px;color:#909399;width:51px;text-align:center;"></div>
<div style="left:2194px;top:554.5px;width:695px;height:176.5px;border:6.5px solid #e8402a;border-radius:11px;"></div>
</body></html>
